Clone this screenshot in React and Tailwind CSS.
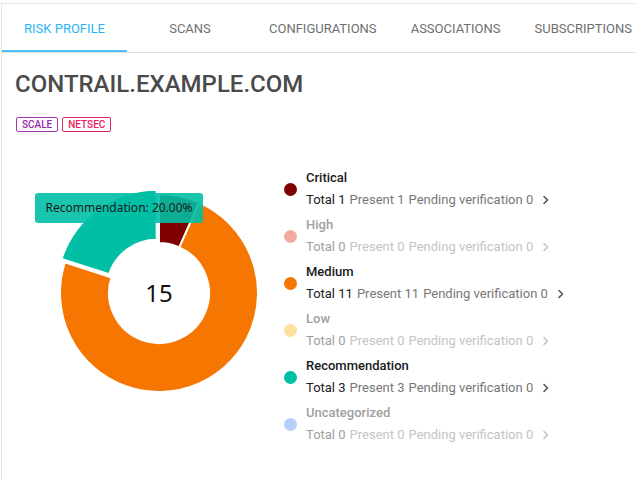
import React from "react";

const tabs = ["RISK PROFILE", "SCANS", "CONFIGURATIONS", "ASSOCIATIONS", "SUBSCRIPTIONS"];

const legend = [
  { name: "Critical", total: 1, present: 1, pending: 0, color: "#7f0000", active: true },
  { name: "High", total: 0, present: 0, pending: 0, color: "#f2ab9c", active: false },
  { name: "Medium", total: 11, present: 11, pending: 0, color: "#f57600", active: true },
  { name: "Low", total: 0, present: 0, pending: 0, color: "#fde19c", active: false },
  { name: "Recommendation", total: 3, present: 3, pending: 0, color: "#00bfa5", active: true },
  { name: "Uncategorized", total: 0, present: 0, pending: 0, color: "#b6cffb", active: false },
];

function arcPath(cx, cy, r0, r1, a0, a1) {
  const rad = (a) => (a * Math.PI) / 180;
  const p = (r, a) => [cx + r * Math.cos(rad(a)), cy + r * Math.sin(rad(a))];
  const large = a1 - a0 > 180 ? 1 : 0;
  const [x0, y0] = p(r1, a0);
  const [x1, y1] = p(r1, a1);
  const [x2, y2] = p(r0, a1);
  const [x3, y3] = p(r0, a0);
  return `M${x0} ${y0} A${r1} ${r1} 0 ${large} 1 ${x1} ${y1} L${x2} ${y2} A${r0} ${r0} 0 ${large} 0 ${x3} ${y3} Z`;
}

function Chevron({ color }) {
  return (
    <svg width="8" height="10" viewBox="0 0 8 10" className="shrink-0">
      <path d="M2 1.5 L5.5 5 L2 8.5" fill="none" stroke={color} strokeWidth="1.6" strokeLinecap="round" strokeLinejoin="round" />
    </svg>
  );
}

function Donut() {
  const cx = 157;
  const cy = 132;
  const r0 = 50;
  const r1 = 99;
  const mid = 234;
  const off = 4;
  const dx = off * Math.cos((mid * Math.PI) / 180);
  const dy = off * Math.sin((mid * Math.PI) / 180);
  return (
    <svg width="272" height="250" viewBox="0 0 272 250" className="block">
      <path d={arcPath(cx, cy, r0, r1, -90, -66)} fill="#7f0000" stroke="#fff" strokeWidth="2" />
      <path d={arcPath(cx, cy, r0, r1, -66, 198)} fill="#f57600" stroke="#fff" strokeWidth="2" />
      <path d={arcPath(cx + dx, cy + dy, r0, r1 + 1, 198, 270)} fill="#00bfa5" stroke="#fff" strokeWidth="2" />
      <text x={cx} y={cy + 9} textAnchor="middle" fontSize="24" fill="#111" style={{ fontFamily: '"Noto Sans", sans-serif' }}>
        15
      </text>
    </svg>
  );
}

export default function App() {
  return (
    <div className="w-[635px] h-[480px] bg-white overflow-hidden pt-[3px] pl-px" style={{ fontFamily: "Roboto, sans-serif" }}>
      <div className="h-[477px] border-l border-t border-[#e4e4e4] w-[700px]">
        <div className="flex h-[49px] border-b border-[#e0e0e0]">
          {tabs.map((t, i) => (
            <div
              key={t}
              className={
                "relative min-w-[126px] first:min-w-[125px] px-4 pt-[2px] flex items-center justify-center text-[13px] whitespace-nowrap " +
                (i === 0 ? "text-[#29b6f6]" : "text-[#6f6f6f]")
              }
            >
              {t}
              {i === 0 && <div className="absolute left-0 right-0 bottom-0 h-[2px] bg-[#4fc3f7]" />}
            </div>
          ))}
        </div>
        <div className="pl-[13px] pt-[16px]">
          <div className="text-[24px] leading-[30px] text-[#4a4a4a] font-medium">CONTRAIL.EXAMPLE.COM</div>
          <div className="flex gap-1 mt-[18px] pl-px">
            <span className="border border-[#a838b8] text-[#9c27b0] text-[10px] font-medium leading-[13px] px-[5px] rounded-[2px]">SCALE</span>
            <span className="border border-[#e0246a] text-[#e91e63] text-[10px] font-medium leading-[13px] px-[5px] rounded-[2px]">NETSEC</span>
          </div>
        </div>
        <div className="flex mt-[29px]">
          <div className="relative w-[272px] h-[250px] shrink-0">
            <Donut />
            <div className="absolute left-[33px] top-[32px] w-[168px] h-[30px] rounded-[3px] bg-[#00bfa5]/90 flex items-center justify-center text-[12px] text-[#1c1c1c]" style={{ fontFamily: '"Noto Sans", sans-serif' }}>
              Recommendation: 20.00%
              <div className="absolute left-[74px] -bottom-[4px] w-0 h-0 border-l-[5px] border-r-[5px] border-t-[4px] border-l-transparent border-r-transparent border-t-[#00bfa5]/90" />
            </div>
          </div>
          <div className="flex flex-col gap-[3px] pt-[6px] pl-[10px]">
            {legend.map((l) => (
              <div key={l.name} className="flex items-center">
                <div className="w-[13px] h-[13px] rounded-full shrink-0" style={{ backgroundColor: l.color }} />
                <div className="pl-[9px]">
                  <div className={"text-[13px] leading-[22px] font-medium " + (l.active ? "text-[#1a1a1a]" : "text-[#a0a0a0]")}>{l.name}</div>
                  <div className="flex items-center text-[13px] leading-[22px] whitespace-nowrap">
                    <span className={l.active ? "text-[#212121]" : "text-[#a0a0a0]"}>Total {l.total}</span>
                    <span className={"ml-[4px] " + (l.active ? "text-[#777]" : "text-[#c4c4c4]")}>Present {l.present}</span>
                    <span className={"ml-[4px] " + (l.active ? "text-[#777]" : "text-[#c4c4c4]")}>Pending verification {l.pending}</span>
                    <span className="ml-[9px]">
                      <Chevron color={l.active ? "#555" : "#c4c4c4"} />
                    </span>
                  </div>
                </div>
              </div>
            ))}
          </div>
        </div>
      </div>
    </div>
  );
}
